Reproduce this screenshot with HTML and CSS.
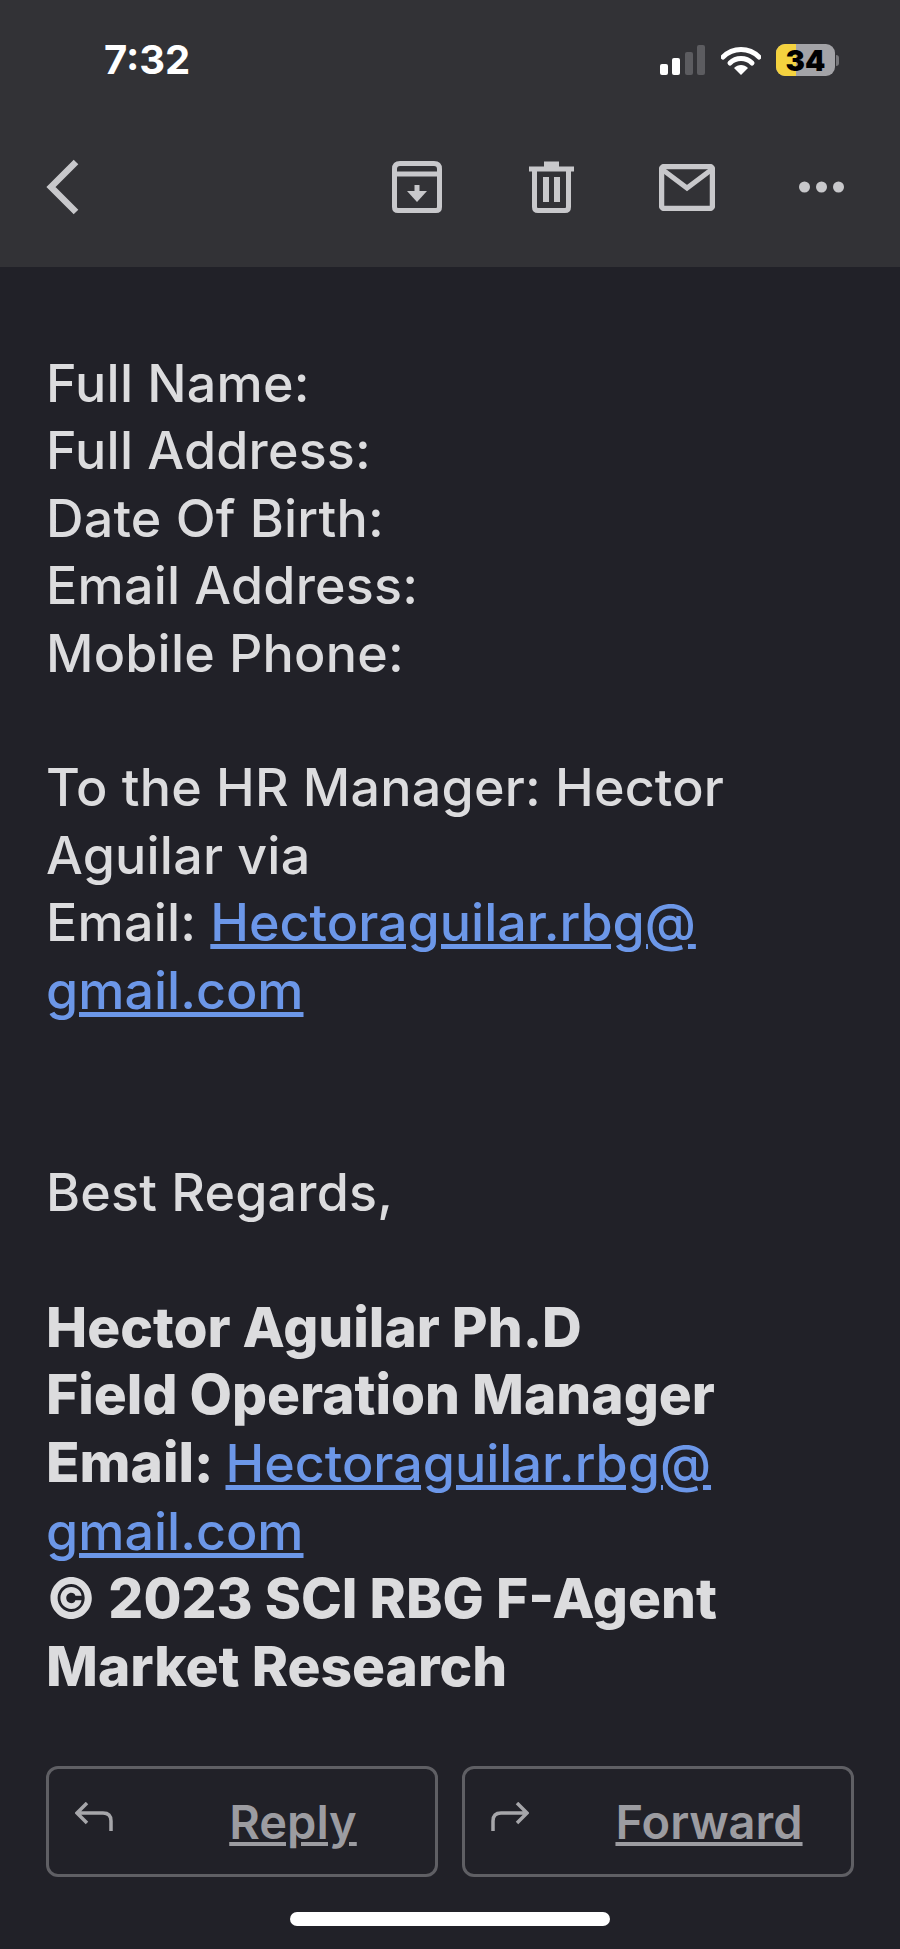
FILE: index.html
```html
<!DOCTYPE html>
<html lang="en">
<head>
  <meta charset="UTF-8" />
  <meta name="viewport" content="width=device-width, initial-scale=1.0" />
  <title>Email</title>
  <link rel="stylesheet" href="styles.css">
</head>
<body>
  <div class="phone">
    <header class="topbar">
      <div class="status">
        <span class="time">7:32</span>
        <div class="status-icons">
          <svg class="signal" width="46" height="30" viewBox="0 0 46 30">
            <rect x="0" y="19" width="8" height="11" rx="2" fill="#fff"/>
            <rect x="12" y="13" width="8" height="17" rx="2" fill="#fff"/>
            <rect x="25" y="7" width="8" height="23" rx="2" fill="#5c5c60"/>
            <rect x="37" y="0" width="8" height="30" rx="2" fill="#5c5c60"/>
          </svg>
          <svg class="wifi" width="40" height="30" viewBox="0 0 40 30">
            <path d="M2 12 C12 2 28 2 38 12" fill="none" stroke="#fff" stroke-width="5" stroke-linecap="round"/>
            <path d="M9 18 C15 12 25 12 31 18" fill="none" stroke="#fff" stroke-width="5" stroke-linecap="round"/>
            <path d="M13 23 C17 19 23 19 27 23 L20 30 Z" fill="#fff"/>
          </svg>
          <div class="battery">
            <div class="battery-body"><span class="battery-fill"></span><span class="battery-num">34</span></div>
            <span class="battery-nub"></span>
          </div>
        </div>
      </div>
      <nav class="toolbar">
        <button class="tool back" aria-label="Back">
          <svg width="33" height="56" viewBox="0 0 33 56"><path d="M30 3 L5 28 L30 53" fill="none" stroke="#c8c8cb" stroke-width="6.500"/></svg>
        </button>
        <div class="tool-group">
          <button class="tool tool-archive" aria-label="Archive">
            <svg width="50" height="52" viewBox="0 0 50 52">
              <path d="M2.500 13 L2.500 8 Q2.500 2.500 8 2.500 L42 2.500 Q47.500 2.500 47.500 8 L47.500 13 M2.500 13 L47.500 13 L47.500 46 Q47.500 49.500 44 49.500 L6 49.500 Q2.500 49.500 2.500 46 Z" fill="none" stroke="#c8c8cb" stroke-width="5"/>
              <path d="M25 24 L25 35" fill="none" stroke="#c8c8cb" stroke-width="5"/>
              <path d="M15 30 L35 30 L25 41 Z" fill="#c8c8cb"/>
            </svg>
          </button>
          <button class="tool tool-trash" aria-label="Delete">
            <svg width="45" height="52" viewBox="0 0 45 52">
              <path d="M0 8 L45 8 M15 3 L30 3" fill="none" stroke="#c8c8cb" stroke-width="5"/>
              <path d="M5.500 8 L5.500 46 Q5.500 49.500 9 49.500 L36 49.500 Q39.500 49.500 39.500 46 L39.500 8" fill="none" stroke="#c8c8cb" stroke-width="5"/>
              <path d="M17 16 L17 41 M28 16 L28 41" fill="none" stroke="#c8c8cb" stroke-width="6"/>
            </svg>
          </button>
          <button class="tool" aria-label="Mark unread">
            <svg width="56" height="47" viewBox="0 0 56 47">
              <rect x="2.500" y="2.500" width="51" height="42" rx="3" fill="none" stroke="#c8c8cb" stroke-width="5.500"/>
              <path d="M4 6 L28 24 L52 6" fill="none" stroke="#c8c8cb" stroke-width="5"/>
            </svg>
          </button>
          <button class="tool" aria-label="More">
            <svg width="45" height="12" viewBox="0 0 45 12">
              <circle cx="5.500" cy="6" r="5.500" fill="#c8c8cb"/>
              <circle cx="22.500" cy="6" r="5.500" fill="#c8c8cb"/>
              <circle cx="39.500" cy="6" r="5.500" fill="#c8c8cb"/>
            </svg>
          </button>
        </div>
      </nav>
    </header>

    <main class="message">
      <p>Full Name:</p>
      <p>Full Address:</p>
      <p>Date Of Birth:</p>
      <p>Email Address:</p>
      <p>Mobile Phone:</p>
      <p>&nbsp;</p>
      <p>To the HR Manager: Hector</p>
      <p>Aguilar via</p>
      <p>Email: <a href="#">Hectoraguilar.rbg@</a></p>
      <p><a href="#">gmail.com</a></p>
      <p>&nbsp;</p>
      <p>&nbsp;</p>
      <p>Best Regards,</p>
      <p>&nbsp;</p>
      <div class="signature">
        <p>Hector Aguilar Ph.D</p>
        <p>Field Operation Manager</p>
        <p>Email: <a href="#">Hectoraguilar.rbg@</a></p>
        <p><a href="#">gmail.com</a></p>
        <p>© 2023 SCI RBG F-Agent</p>
        <p>Market Research</p>
      </div>
    </main>

    <div class="actions">
      <a class="action" href="#">
        <svg width="38" height="30" viewBox="0 0 38 30"><path d="M12 1 L2 11 L12 21 M2 11 L28 11 Q36 11 36 19 L36 29" fill="none" stroke="#a6a6aa" stroke-width="3.500"/></svg>
        <span class="action-label">Reply</span>
      </a>
      <a class="action" href="#">
        <svg width="38" height="30" viewBox="0 0 38 30"><path d="M26 1 L36 11 L26 21 M36 11 L10 11 Q2 11 2 19 L2 29" fill="none" stroke="#a6a6aa" stroke-width="3.500"/></svg>
        <span class="action-label">Forward</span>
      </a>
    </div>

    <div class="home-row"><span class="home-bar"></span></div>
  </div>
</body>
</html>
```

FILE: styles.css
```css
html, body {
  margin: 0;
  background: #212128;
}
.phone {
  position: relative;
  width: 900px;
  height: 1949px;
  overflow: hidden;
  background: #212128;
  font-family: 'Inter', 'Liberation Sans', sans-serif;
}
.topbar {
  height: 267px;
  background: #323236;
}
.status {
  display: flex;
  justify-content: space-between;
  align-items: center;
  height: 30px;
  padding: 45px 61px 0 104px;
}
.time {
  color: white;
  font-size: 40px;
  font-weight: 700;
  line-height: 30px;
}
.status-icons {
  display: flex;
  align-items: center;
  gap: 15px;
}
.battery {
  display: flex;
  align-items: center;
  gap: 1px;
}
.battery-body {
  position: relative;
  width: 59px;
  height: 32px;
  border-radius: 9px;
  background: #a3a3a7;
  display: flex;
  align-items: center;
  justify-content: center;
}
.battery-fill {
  position: absolute;
  left: 0;
  top: 0;
  bottom: 0;
  width: 20px;
  border-radius: 9px 0 0 9px;
  background: #f4d23f;
}
.battery-num {
  position: relative;
  color: black;
  font-size: 29px;
  font-weight: 900;
  line-height: 1;
}
.battery-nub {
  width: 3px;
  height: 11px;
  border-radius: 0 3px 3px 0;
  background: #77777b;
}
.toolbar {
  display: flex;
  justify-content: space-between;
  align-items: center;
  height: 56px;
  padding: 84px 56px 0 46px;
}
.tool-group {
  display: flex;
  align-items: center;
  gap: 84px;
}
.tool-archive {
  margin-right: 3px;
}
.tool-trash {
  margin-right: 1px;
}
.tool {
  display: flex;
  padding: 0;
  background: none;
  border: none;
  cursor: pointer;
}
.message {
  padding: 83px 40px 0 46px;
  color: #dcdcde;
  font-size: 52px;
  font-weight: 500;
  letter-spacing: 0.2px;
  line-height: 67.4px;
}
.message p {
  margin: 0;
  white-space: nowrap;
}
.message a {
  color: #6c97e8;
  text-decoration: underline;
  font-size: 52px;
  font-weight: 500;
  letter-spacing: 0;
}
.signature {
  font-weight: 800;
  font-size: 55px;
  letter-spacing: 0;
}
.actions {
  display: flex;
  gap: 24px;
  padding: 66px 46px 0;
}
.action {
  position: relative;
  flex: 1;
  height: 111px;
  box-sizing: border-box;
  border: 3px solid #5f5f64;
  border-radius: 12px;
  display: flex;
  align-items: center;
  justify-content: center;
  color: #9c9ca1;
  font-size: 47px;
  font-weight: 600;
  text-decoration: underline;
}
.action svg {
  position: absolute;
  left: 26px;
  top: 33px;
}
.action-label {
  display: block;
  margin-left: 102px;
}
.home-row {
  display: flex;
  justify-content: center;
  padding-top: 35px;
}
.home-bar {
  width: 320px;
  height: 14px;
  border-radius: 7px;
  background: white;
}
```
